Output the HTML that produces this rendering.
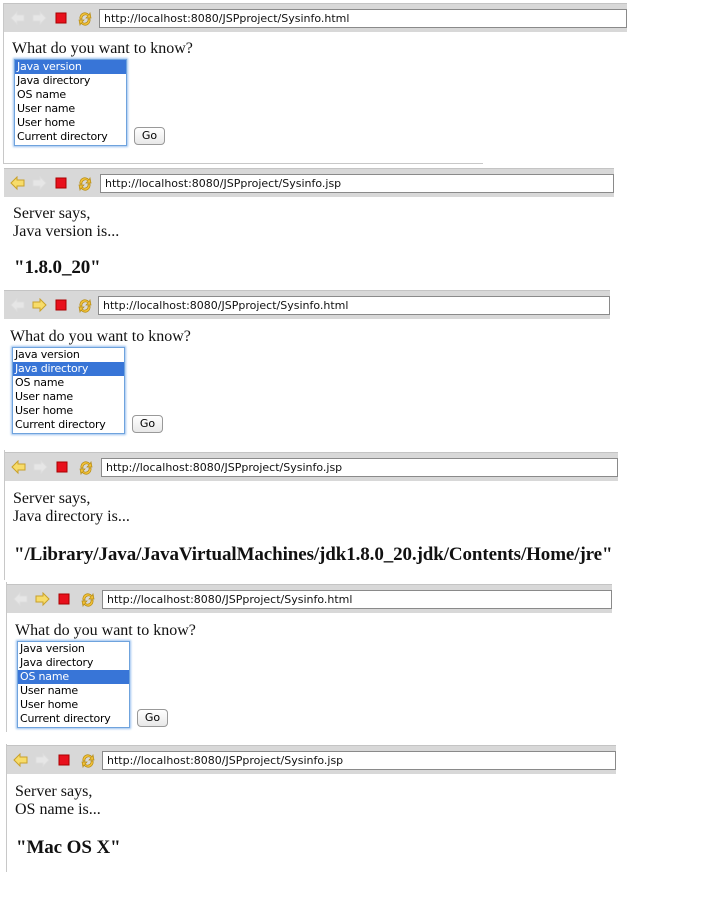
<!DOCTYPE html>
<html><head><meta charset="utf-8"><style>
body{margin:0;width:707px;height:919px;background:#fff;position:relative;overflow:hidden;font-family:"Liberation Serif",serif;}
.a{position:absolute}
.tb{position:absolute;height:28px;background:#d8d8d8;border-top:1px solid #c4c4c4}
.url{position:absolute;top:5px;height:17px;right:0;background:#fff;border:1px solid #8a8a8a;font:11px "DejaVu Sans","Liberation Sans",sans-serif;line-height:17px;padding-left:4px;color:#111;white-space:nowrap}
.ic{position:absolute;top:7px}
.t{position:absolute;font-size:16px;color:#111;line-height:18px;white-space:nowrap}
.b{position:absolute;font-size:19px;font-weight:bold;color:#111;white-space:nowrap;letter-spacing:-0.1px}
.lb{position:absolute;width:111px;height:85px;border:1px solid #6fa3dd;box-shadow:0 0 2px 1px #9cc2ee;background:#fff;font:11px "DejaVu Sans","Liberation Sans",sans-serif;line-height:14px}
.lb div{padding-left:2px;height:14px;white-space:nowrap;letter-spacing:-0.2px}
.lb .s{background:#3875d7;color:#fff}
.go{position:absolute;width:29px;height:16px;border:1px solid #999;border-radius:4px;background:linear-gradient(#fff,#e8e8e8);font:11px "DejaVu Sans",sans-serif;text-align:center;line-height:16px}
.vl{position:absolute;width:1px;background:#c8c8c8}
.hl{position:absolute;height:1px;background:#c8c8c8}
</style></head><body>
<svg width="0" height="0" style="position:absolute"><defs>
<g id="bk"><path d="M1 7 L7 1 V4 H14 V10 H7 V13 Z" stroke-width="1"/></g>
<g id="fw"><path d="M14 7 L8 1 V4 H1 V10 H8 V13 Z" stroke-width="1"/></g>
<g id="st"><rect x="1" y="1" width="10" height="10" fill="#e8101c" stroke="#a00"/></g>
<g id="rl"><path d="M3 8 A5 5 0 0 1 12 4 L13 2 L14 7 L9 7 L11 5 A3.5 3.5 0 0 0 5 8 Z M13 8 A5 5 0 0 1 4 12 L3 14 L2 9 L7 9 L5 11 A3.5 3.5 0 0 0 11 8Z" fill="#f2c23a" stroke="#b58a10" stroke-width=".7"/></g>
</defs></svg>

<!-- panel 1 -->
<div class="vl" style="left:3px;top:3px;height:161px"></div>
<div class="hl" style="left:3px;top:163px;width:480px"></div>
<div class="tb" style="left:4px;top:3px;width:623px">
<svg class="ic" style="left:6px" width="16" height="15"><use href="#bk" fill="#e6e6e6" stroke="#ddd"/></svg>
<svg class="ic" style="left:28px" width="16" height="15"><use href="#fw" fill="#e6e6e6" stroke="#ddd"/></svg>
<svg class="ic" style="left:51px;top:8px" width="13" height="13"><use href="#st"/></svg>
<svg class="ic" style="left:73px" width="16" height="16"><use href="#rl"/></svg>
<div class="url" style="left:95px">http://localhost:8080/JSPproject/Sysinfo.html</div></div>
<div class="t" style="left:12px;top:40px">What do you want to know?</div>
<div class="lb" style="left:14px;top:59px"><div class="s">Java version</div><div>Java directory</div><div>OS name</div><div>User name</div><div>User home</div><div>Current directory</div></div>
<div class="go" style="left:134px;top:127px">Go</div>

<!-- panel 2 -->
<div class="tb" style="left:4px;top:168px;width:610px">
<svg class="ic" style="left:6px" width="16" height="15"><use href="#bk" fill="#f7dc6a" stroke="#c9a12a"/></svg>
<svg class="ic" style="left:28px" width="16" height="15"><use href="#fw" fill="#e6e6e6" stroke="#ddd"/></svg>
<svg class="ic" style="left:51px;top:8px" width="13" height="13"><use href="#st"/></svg>
<svg class="ic" style="left:73px" width="16" height="16"><use href="#rl"/></svg>
<div class="url" style="left:96px">http://localhost:8080/JSPproject/Sysinfo.jsp</div></div>
<div class="t" style="left:13px;top:205px">Server says,</div>
<div class="t" style="left:13px;top:223px">Java version is...</div>
<div class="b" style="left:14px;top:257px">"1.8.0_20"</div>

<!-- panel 3 -->
<div class="tb" style="left:4px;top:290px;width:606px">
<svg class="ic" style="left:6px" width="16" height="15"><use href="#bk" fill="#e6e6e6" stroke="#ddd"/></svg>
<svg class="ic" style="left:28px" width="16" height="15"><use href="#fw" fill="#f7dc6a" stroke="#c9a12a"/></svg>
<svg class="ic" style="left:51px;top:8px" width="13" height="13"><use href="#st"/></svg>
<svg class="ic" style="left:73px" width="16" height="16"><use href="#rl"/></svg>
<div class="url" style="left:94px">http://localhost:8080/JSPproject/Sysinfo.html</div></div>
<div class="t" style="left:10px;top:328px">What do you want to know?</div>
<div class="lb" style="left:12px;top:347px"><div>Java version</div><div class="s">Java directory</div><div>OS name</div><div>User name</div><div>User home</div><div>Current directory</div></div>
<div class="go" style="left:132px;top:415px">Go</div>

<!-- panel 4 -->
<div class="vl" style="left:4px;top:450px;height:130px"></div>
<div class="tb" style="left:5px;top:452px;width:613px">
<svg class="ic" style="left:6px" width="16" height="15"><use href="#bk" fill="#f7dc6a" stroke="#c9a12a"/></svg>
<svg class="ic" style="left:28px" width="16" height="15"><use href="#fw" fill="#e6e6e6" stroke="#ddd"/></svg>
<svg class="ic" style="left:51px;top:8px" width="13" height="13"><use href="#st"/></svg>
<svg class="ic" style="left:73px" width="16" height="16"><use href="#rl"/></svg>
<div class="url" style="left:96px">http://localhost:8080/JSPproject/Sysinfo.jsp</div></div>
<div class="t" style="left:13px;top:490px">Server says,</div>
<div class="t" style="left:13px;top:508px">Java directory is...</div>
<div class="b" style="left:14px;top:544px">"/Library/Java/JavaVirtualMachines/jdk1.8.0_20.jdk/Contents/Home/jre"</div>

<!-- panel 5 -->
<div class="vl" style="left:6px;top:582px;height:150px"></div>
<div class="tb" style="left:7px;top:584px;width:605px">
<svg class="ic" style="left:6px" width="16" height="15"><use href="#bk" fill="#e6e6e6" stroke="#ddd"/></svg>
<svg class="ic" style="left:28px" width="16" height="15"><use href="#fw" fill="#f7dc6a" stroke="#c9a12a"/></svg>
<svg class="ic" style="left:51px;top:8px" width="13" height="13"><use href="#st"/></svg>
<svg class="ic" style="left:73px" width="16" height="16"><use href="#rl"/></svg>
<div class="url" style="left:95px">http://localhost:8080/JSPproject/Sysinfo.html</div></div>
<div class="t" style="left:15px;top:622px">What do you want to know?</div>
<div class="lb" style="left:17px;top:641px"><div>Java version</div><div>Java directory</div><div class="s">OS name</div><div>User name</div><div>User home</div><div>Current directory</div></div>
<div class="go" style="left:137px;top:709px">Go</div>

<!-- panel 6 -->
<div class="vl" style="left:6px;top:744px;height:128px"></div>
<div class="tb" style="left:7px;top:745px;width:609px">
<svg class="ic" style="left:6px" width="16" height="15"><use href="#bk" fill="#f7dc6a" stroke="#c9a12a"/></svg>
<svg class="ic" style="left:28px" width="16" height="15"><use href="#fw" fill="#e6e6e6" stroke="#ddd"/></svg>
<svg class="ic" style="left:51px;top:8px" width="13" height="13"><use href="#st"/></svg>
<svg class="ic" style="left:73px" width="16" height="16"><use href="#rl"/></svg>
<div class="url" style="left:95px">http://localhost:8080/JSPproject/Sysinfo.jsp</div></div>
<div class="t" style="left:15px;top:783px">Server says,</div>
<div class="t" style="left:15px;top:801px">OS name is...</div>
<div class="b" style="left:16px;top:837px">"Mac OS X"</div>
</body></html>
